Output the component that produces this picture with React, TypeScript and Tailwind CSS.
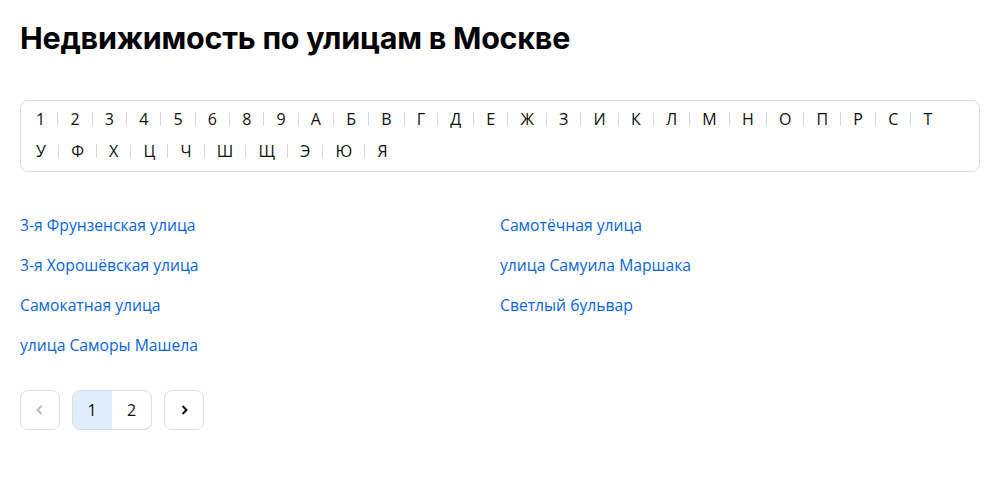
const row1 = ["1", "2", "3", "4", "5", "6", "8", "9", "А", "Б", "В", "Г", "Д", "Е", "Ж", "З", "И", "К", "Л", "М", "Н", "О", "П", "Р", "С", "Т"];
const row2 = ["У", "Ф", "Х", "Ц", "Ч", "Ш", "Щ", "Э", "Ю", "Я"];

const leftStreets = [
  "3-я Фрунзенская улица",
  "3-я Хорошёвская улица",
  "Самокатная улица",
  "улица Саморы Машела",
];
const rightStreets = ["Самотёчная улица", "улица Самуила Маршака", "Светлый бульвар"];

function LetterRow({ items }: { items: string[] }) {
  return (
    <div className="flex h-8 items-center">
      {items.map((ch, i) => (
        <div key={ch} className="flex items-center">
          {i > 0 && <span className="h-[14px] w-px bg-[#d9d9d9]" />}
          <a className="px-[12.1px] text-[16px] leading-8 text-[#111]">{ch}</a>
        </div>
      ))}
    </div>
  );
}

export default function App() {
  return (
    <div className="min-h-[500px] bg-white px-5 pt-[18px] font-['Open_Sans',sans-serif]">
      <h1 className="font-['Inter',sans-serif] text-[30.5px] font-bold leading-10 tracking-[-0.25px] text-black">
        Недвижимость по улицам в Москве
      </h1>

      <div className="mt-[42px] rounded-lg border border-[#dcdcdc] px-[3px] pt-[2px] pb-[4px]">
        <LetterRow items={row1} />
        <LetterRow items={row2} />
      </div>

      <div className="mt-[39px] grid grid-cols-2">
        <div className="flex flex-col">
          {leftStreets.map((s) => (
            <a key={s} className="h-10 text-[15.7px] leading-[28px] text-[#0866dd]">{s}</a>
          ))}
        </div>
        <div className="flex flex-col">
          {rightStreets.map((s) => (
            <a key={s} className="h-10 text-[15.7px] leading-[28px] text-[#0866dd]">{s}</a>
          ))}
        </div>
      </div>

      <div className="mt-[19px] flex items-center gap-3">
        <button className="flex h-10 w-10 items-center justify-center rounded-lg border border-[#dcdcdc] text-[#bbb]">
          <svg width="14" height="14" viewBox="0 0 14 14" fill="none">
            <path d="M8.5 3 L4.5 7 L8.5 11" stroke="currentColor" strokeWidth="2" />
          </svg>
        </button>
        <div className="flex h-10 w-20 overflow-hidden rounded-lg border border-[#dcdcdc]">
          <span className="-my-px -ml-px flex w-10 items-center justify-center bg-[#e0edfa] text-[16px] text-[#111]">1</span>
          <span className="flex flex-1 items-center justify-center text-[16px] text-[#111]">2</span>
        </div>
        <button className="flex h-10 w-10 items-center justify-center rounded-lg border border-[#dcdcdc] text-[#111]">
          <svg width="14" height="14" viewBox="0 0 14 14" fill="none">
            <path d="M5.5 3 L9.5 7 L5.5 11" stroke="currentColor" strokeWidth="2" />
          </svg>
        </button>
      </div>
    </div>
  );
}
